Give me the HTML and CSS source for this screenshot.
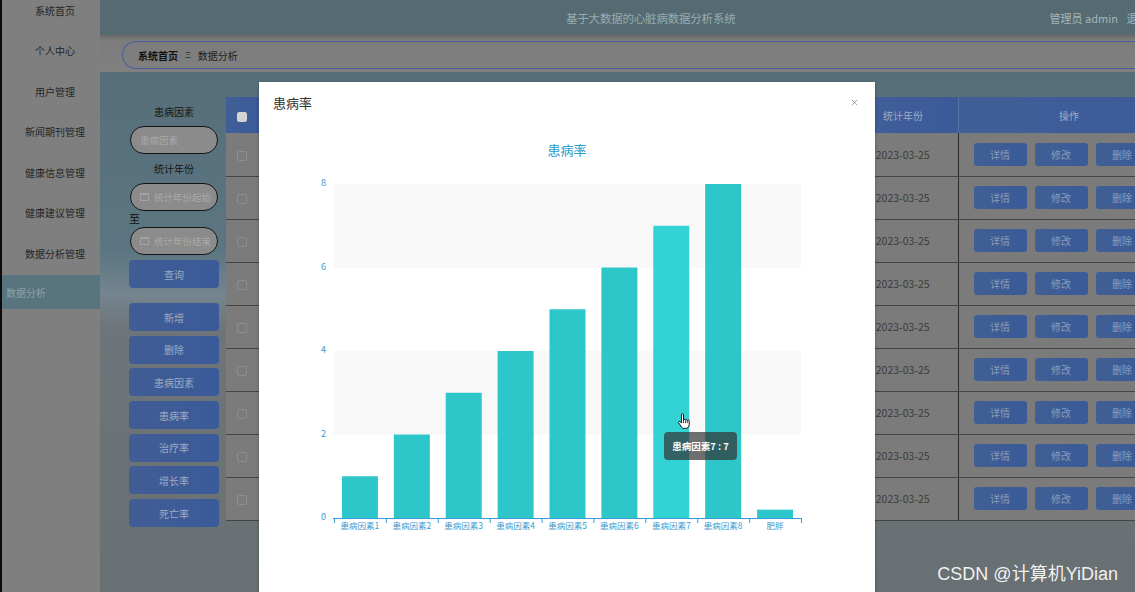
FILE: index.html
```html
<!DOCTYPE html>
<html lang="zh-CN">
<head>
<meta charset="utf-8">
<meta name="viewport" content="width=device-width, initial-scale=1">
<title>数据分析</title>
<link rel="stylesheet" href="styles.css">
</head>
<body>
<div class="page">
  <aside class="side">
    <nav class="side-menu">
      <div class="side-item">系统首页</div>
      <div class="side-item">个人中心</div>
      <div class="side-item">用户管理</div>
      <div class="side-item">新闻期刊管理</div>
      <div class="side-item">健康信息管理</div>
      <div class="side-item">健康建议管理</div>
      <div class="side-item">数据分析管理</div>
      <div class="side-sub">数据分析</div>
    </nav>
  </aside>

  <main class="main">
    <header class="topbar">
      <div class="sys-title">基于大数据的心脏病数据分析系统</div>
      <div class="user">管理员 admin <span class="logout">退出登录</span></div>
    </header>

    <div class="crumbbar">
      <div class="crumbs"><b>系统首页</b><span class="sep">Ξ</span><span>数据分析</span></div>
    </div>

    <section class="content">
      <div class="filters">
        <label class="f-label">患病因素</label>
        <div class="f-input">患病因素</div>
        <label class="f-label f-label2">统计年份</label>
        <div class="f-input"><i class="cal"></i>统计年份起始</div>
        <div class="f-to">至</div>
        <div class="f-input f-input3"><i class="cal"></i>统计年份结束</div>
        <button class="btn btn-query">查询</button>
        <div class="btn-stack">
          <button class="btn">新增</button>
          <button class="btn">删除</button>
          <button class="btn">患病因素</button>
          <button class="btn">患病率</button>
          <button class="btn">治疗率</button>
          <button class="btn">增长率</button>
          <button class="btn">死亡率</button>
        </div>
      </div>

      <!-- 中间几栏被弹窗盖住，只留空格 -->
      <table class="grid">
        <colgroup>
          <col style="width:32px"><col style="width:590px"><col style="width:110px"><col style="width:222px">
        </colgroup>
        <thead>
          <tr><th><i class="ck ck-on"></i></th><th></th><th>统计年份</th><th>操作</th></tr>
        </thead>
        <tbody>
          <tr><td><i class="ck"></i></td><td></td><td class="date">2023-03-25</td><td><div class="ops"><span class="op">详情</span><span class="op">修改</span><span class="op">删除</span></div></td></tr>
          <tr><td><i class="ck"></i></td><td></td><td class="date">2023-03-25</td><td><div class="ops"><span class="op">详情</span><span class="op">修改</span><span class="op">删除</span></div></td></tr>
          <tr><td><i class="ck"></i></td><td></td><td class="date">2023-03-25</td><td><div class="ops"><span class="op">详情</span><span class="op">修改</span><span class="op">删除</span></div></td></tr>
          <tr><td><i class="ck"></i></td><td></td><td class="date">2023-03-25</td><td><div class="ops"><span class="op">详情</span><span class="op">修改</span><span class="op">删除</span></div></td></tr>
          <tr><td><i class="ck"></i></td><td></td><td class="date">2023-03-25</td><td><div class="ops"><span class="op">详情</span><span class="op">修改</span><span class="op">删除</span></div></td></tr>
          <tr><td><i class="ck"></i></td><td></td><td class="date">2023-03-25</td><td><div class="ops"><span class="op">详情</span><span class="op">修改</span><span class="op">删除</span></div></td></tr>
          <tr><td><i class="ck"></i></td><td></td><td class="date">2023-03-25</td><td><div class="ops"><span class="op">详情</span><span class="op">修改</span><span class="op">删除</span></div></td></tr>
          <tr><td><i class="ck"></i></td><td></td><td class="date">2023-03-25</td><td><div class="ops"><span class="op">详情</span><span class="op">修改</span><span class="op">删除</span></div></td></tr>
          <tr><td><i class="ck"></i></td><td></td><td class="date">2023-03-25</td><td><div class="ops"><span class="op">详情</span><span class="op">修改</span><span class="op">删除</span></div></td></tr>
        </tbody>
      </table>
    </section>
  </main>
</div>

<!-- 弹窗：患病率统计图 -->
<div class="modal">
  <div class="modal-hd">
    <span class="modal-title">患病率</span>
    <svg class="modal-x" viewBox="0 0 8 8" fill="none" stroke="currentColor" stroke-width="1"><path d="M1 1l6 6M7 1L1 7"/></svg>
  </div>
  <div class="chart-title">患病率</div>
  <svg class="chart" width="616" height="380" viewBox="0 0 616 380">
    <rect x="75" y="24" width="467" height="83.5" fill="#f8f8f9"/>
    <rect x="75" y="191" width="467" height="83.5" fill="#f8f8f9"/>

    <g class="ylab">
      <text x="67" y="24">8</text>
      <text x="67" y="107.5">6</text>
      <text x="67" y="191">4</text>
      <text x="67" y="274.5">2</text>
      <text x="67" y="358">0</text>
    </g>

    <g fill="#2ec7c9">
      <rect x="82.94" y="316.25" width="36" height="41.75"/>
      <rect x="134.83" y="274.5" width="36" height="83.5"/>
      <rect x="186.72" y="232.75" width="36" height="125.25"/>
      <rect x="238.61" y="191" width="36" height="167"/>
      <rect x="290.5" y="149.25" width="36" height="208.75"/>
      <rect x="342.39" y="107.5" width="36" height="250.5"/>
      <rect x="394.28" y="65.75" width="36" height="292.25" fill="#33d3d5"/>
      <rect x="446.17" y="24" width="36" height="334"/>
      <rect x="498.06" y="349.65" width="36" height="8.35"/>
    </g>

    <g stroke="#3a9bd0" stroke-width="1">
      <path d="M74 358.5H543"/>
      <path d="M75.5 358v5M127.4 358v5M179.3 358v5M231.2 358v5M283.1 358v5M334.9 358v5M386.8 358v5M438.7 358v5M490.6 358v5M542.5 358v5"/>
    </g>

    <g class="xlab">
      <text x="100.94" y="367">患病因素1</text>
      <text x="152.83" y="367">患病因素2</text>
      <text x="204.72" y="367">患病因素3</text>
      <text x="256.61" y="367">患病因素4</text>
      <text x="308.5" y="367">患病因素5</text>
      <text x="360.39" y="367">患病因素6</text>
      <text x="412.28" y="367">患病因素7</text>
      <text x="464.17" y="367">患病因素8</text>
      <text x="516.06" y="367">肥胖</text>
    </g>
  </svg>

  <div class="tip">患病因素7 : 7</div>
  <svg class="cursor" width="13" height="17" viewBox="0 0 16 20">
    <path d="M5.5 1.6a1.25 1.25 0 0 1 2.5 0V8h.2a1.2 1.2 0 0 1 2.3.3 1.2 1.2 0 0 1 2.2.5 1.2 1.2 0 0 1 2.3.6v4.4c0 2.6-1.7 4.7-4.3 4.7H8.6c-1.3 0-2.3-.6-3-1.6L2.2 11.8a1.2 1.2 0 0 1 1.9-1.5l1.4 1.5z" fill="#fff" stroke="#000" stroke-width="1.1" stroke-linejoin="round"/>
    <path d="M8 8v4M10.4 8.6v3.4M12.7 9.3v2.7" stroke="#000" stroke-width=".9"/>
  </svg>
</div>

<div class="wm">CSDN @计算机YiDian</div>
</body>
</html>
```

FILE: styles.css
```css
*{box-sizing:border-box;}
html,body{margin:0;height:100%;}
body{ position:relative; overflow:hidden; font-family:"Noto Sans CJK SC","Noto Sans",sans-serif; color:#222; background:#7f7f7f; }

.page{ display:flex; height:592px; }

/* 侧边菜单（遮罩下的颜色） */
.side{ width:100px; flex:0 0 100px; background:#7f7f7f; border-left:2px solid #0c0c0c; overflow:hidden; }
.side-menu{ margin-top:-10px; }
.side-item{ height:40.5px; display:flex; align-items:center; justify-content:center; padding-left:8px; font-size:10px; color:#262626; }
.side-sub{ height:34px; margin:1.5px 0 0 -2px; padding-left:6px; display:flex; align-items:center; background:#58747f; color:#8ca1aa; font-size:10px; }

.main{ flex:1; min-width:0; display:flex; flex-direction:column; overflow:hidden; }

.topbar{ height:35px; flex:0 0 35px; display:flex; align-items:center; background:#556b71; padding-left:466px; white-space:nowrap; }
.sys-title{ font-size:11.5px; color:#98abb0; letter-spacing:-.2px; }
.user{ margin-left:314px; font-size:11px; color:#a6b5b9; }
.logout{ margin-left:6px; }

.crumbbar{ height:37px; flex:0 0 37px; background:linear-gradient(#686868,#7c7c7c 5px,#808080); padding:6px 0 0 22px; }
.crumbs{ height:28px; display:flex; align-items:center; gap:6px; padding-left:15px; border:1px solid #4560a0; border-right:none; border-radius:14px 0 0 14px; font-size:10px; color:#1d1d1d; white-space:nowrap; }
.crumbs b{ color:#111; }
.crumbs .sep{ font-family:"Liberation Sans",sans-serif; font-size:9px; color:#333; margin:0 1px; }

/* 内容区：背景图近似成渐层 */
.content{ flex:1; display:flex; gap:6px; padding:25px 0 0 28px; background:linear-gradient(180deg,#566e78 0,#5b7682 180px,#758590 222px,#6e757a 255px,#6b7276 420px,#697073 100%); }

.filters{ width:92px; flex:0 0 92px; display:flex; flex-direction:column; padding-top:8px; }
.f-label{ display:block; height:14px; line-height:14px; text-align:center; font-size:10px; color:#161616; }
.f-label2{ margin-top:8px; }
.f-input{ margin:7px 0 0 2px; width:88px; height:28px; display:flex; align-items:center; gap:5px; padding-left:9px; border:1.5px solid #141414; border-radius:14px; background:#8b8b8b; color:#a9a9a9; font-size:9.5px; white-space:nowrap; overflow:hidden; }
.f-input3{ margin-top:2px; }
.cal{ width:9px; height:8px; flex:0 0 9px; border:1px solid #a3a3a3; border-top-width:2px; border-radius:1px; }
.f-to{ height:14px; line-height:14px; font-size:11px; color:#111; margin-left:1px; }

.btn{ display:block; width:90px; height:28px; margin-left:1px; border:none; border-radius:4px; background:linear-gradient(90deg,#405d94,#3b5a99); color:#9eabc3; font-family:inherit; font-size:10px; padding:0; }
.btn-query{ margin-top:5px; }
.btn-stack{ display:flex; flex-direction:column; gap:4.7px; margin-top:15px; }

/* 表格 */
.grid{ width:954px; flex:0 0 954px; border-collapse:collapse; table-layout:fixed; align-self:flex-start; font-size:10px; }
.grid th{ height:36px; background:linear-gradient(90deg,#415f97,#3b5a99); color:#9cadca; font-weight:normal; border-right:1px solid #5570a3; }
.grid th:first-child{ border-right:none; }
.grid td{ height:43px; background:#7b7b7b; border-bottom:1px solid #454545; text-align:center; color:#3b3b3b; padding:0; }
.grid td.date{ font-size:10.5px; border-right:1px solid #2a2a2a; }
.ck{ display:inline-block; width:10px; height:10px; border:1px solid #8e8e8e; border-radius:2px; vertical-align:middle; }
.ck-on{ background:#d3d3d3; border-color:#d3d3d3; }
.ops{ display:flex; gap:8px; padding-left:15px; }
.op{ flex:0 0 53px; height:23px; line-height:23px; border-radius:3px; background:linear-gradient(90deg,#405f93,#3a5a99); color:#8a9bbb; }

/* 弹窗 */
.modal{ position:absolute; left:259px; top:82px; width:616px; height:530px; background:#fff; box-shadow:0 1px 3px rgba(0,0,0,.3); }
.modal-hd{ height:42px; display:flex; align-items:flex-start; justify-content:space-between; padding:14px 17px 0 14px; }
.modal-title{ font-size:13px; line-height:14px; color:#303133; }
.modal-x{ width:7px; height:7px; margin-top:3px; color:#909399; }
.chart-title{ padding-top:19px; height:36px; line-height:14px; text-align:center; font-size:13px; color:#2f9bc9; }
.chart{ display:block; }
.chart text{ font-family:"Noto Sans CJK SC","Noto Sans",sans-serif; fill:#3a9bd0; dominant-baseline:middle; }
.ylab text{ font-size:9px; text-anchor:end; }
.xlab text{ font-size:8.5px; text-anchor:middle; }

.tip{ position:absolute; left:405px; top:350px; width:73px; height:28px; line-height:28px; text-align:center; border-radius:4px; background:rgba(50,50,50,.7); color:#fff; font-size:9.5px; font-weight:bold; white-space:nowrap; }
.cursor{ position:absolute; left:418px; top:331px; }

.wm{ position:absolute; right:17px; bottom:7px; font-family:"Liberation Sans","Noto Sans CJK SC",sans-serif; font-size:18px; color:rgba(255,255,255,.92); }
```
